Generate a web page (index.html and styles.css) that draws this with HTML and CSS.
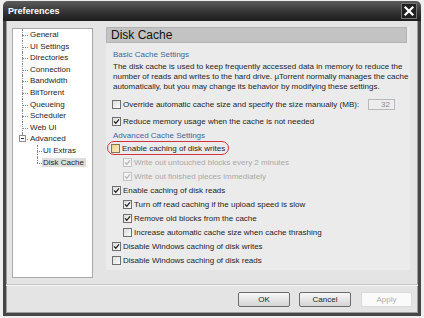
FILE: index.html
```html
<html>
  <head>
    <title>Preferences</title>
    <link rel="stylesheet" href="styles.css">
  </head>
  <body>
    <div class="window">
      <div class="titlebar">
        <span class="title">Preferences</span>
        <span class="close">
          <svg width="14" height="14" viewBox="0 0 14 14">
            <path d="M3.5 3.5 L10.5 10.5 M10.5 3.5 L3.5 10.5" stroke="#fff" stroke-width="2.2" stroke-linecap="square" />
          </svg>
        </span>
      </div>

      <div class="frame">
        <div class="main">
          <!-- Category tree -->
          <div class="tree">
            <ul class="branch">
              <li>General</li>
              <li>UI Settings</li>
              <li>Directories</li>
              <li>Connection</li>
              <li>Bandwidth</li>
              <li>BitTorrent</li>
              <li>Queueing</li>
              <li>Scheduler</li>
              <li>Web UI</li>
              <li class="open">
                <span class="toggle"></span>Advanced
                <ul class="branch sub">
                  <li>UI Extras</li>
                  <li><span class="selected">Disk Cache</span></li>
                </ul>
              </li>
            </ul>
          </div>

          <!-- Settings page -->
          <div class="panel">
            <div class="panel-head">Disk Cache</div>
            <div class="panel-body">
              <div class="section-title">Basic Cache Settings</div>
              <p class="desc">
                The disk cache is used to keep frequently accessed data in memory to reduce the<br>
                number of reads and writes to the hard drive. µTorrent normally manages the cache<br>
                automatically, but you may change its behavior by modifying these settings.
              </p>

              <div class="row spread first">
                <label class="opt"><span class="cb"></span>Override automatic cache size and specify the size manually (MB):</label>
                <span class="numbox">32</span>
              </div>
              <div class="row gap3">
                <span class="cb"><svg width="7" height="7" viewBox="0 0 7 7"><polyline points="1,3.4 2.8,5.3 6,1.4" fill="none" stroke="#222" stroke-width="1.3" /></svg></span>Reduce memory usage when the cache is not needed
              </div>

              <div class="section-title adv">Advanced Cache Settings</div>
              <div class="row">
                <span class="ring"><span class="cb hover"></span>Enable caching of disk writes</span>
              </div>
              <div class="row sub disabled">
                <span class="cb"><svg width="7" height="7" viewBox="0 0 7 7"><polyline points="1,3.4 2.8,5.3 6,1.4" fill="none" stroke="#b4b4b4" stroke-width="1.3" /></svg></span>Write out untouched blocks every 2 minutes
              </div>
              <div class="row sub disabled">
                <span class="cb"><svg width="7" height="7" viewBox="0 0 7 7"><polyline points="1,3.4 2.8,5.3 6,1.4" fill="none" stroke="#b4b4b4" stroke-width="1.3" /></svg></span>Write out finished pieces immediately
              </div>
              <div class="row">
                <span class="cb"><svg width="7" height="7" viewBox="0 0 7 7"><polyline points="1,3.4 2.8,5.3 6,1.4" fill="none" stroke="#222" stroke-width="1.3" /></svg></span>Enable caching of disk reads
              </div>
              <div class="row sub">
                <span class="cb"><svg width="7" height="7" viewBox="0 0 7 7"><polyline points="1,3.4 2.8,5.3 6,1.4" fill="none" stroke="#222" stroke-width="1.3" /></svg></span>Turn off read caching if the upload speed is slow
              </div>
              <div class="row sub">
                <span class="cb"><svg width="7" height="7" viewBox="0 0 7 7"><polyline points="1,3.4 2.8,5.3 6,1.4" fill="none" stroke="#222" stroke-width="1.3" /></svg></span>Remove old blocks from the cache
              </div>
              <div class="row sub">
                <span class="cb"></span>Increase automatic cache size when cache thrashing
              </div>
              <div class="row">
                <span class="cb"><svg width="7" height="7" viewBox="0 0 7 7"><polyline points="1,3.4 2.8,5.3 6,1.4" fill="none" stroke="#222" stroke-width="1.3" /></svg></span>Disable Windows caching of disk writes
              </div>
              <div class="row">
                <span class="cb"></span>Disable Windows caching of disk reads
              </div>
            </div>
          </div>
        </div>

        <div class="footer">
          <span class="btn">OK</span>
          <span class="btn">Cancel</span>
          <span class="btn apply">Apply</span>
        </div>
      </div>
    </div>
  </body>
</html>
```

FILE: styles.css
```css
body {
  margin: 0;
  padding-top: 1px;
  background: #efefef;
  font-family: "Liberation Sans", Arial, sans-serif;
  font-size: 8px;
  color: #1e1e1e;
}

.window {
  margin-left: 3px;
  width: 418px;
  height: 315px;
  display: flex;
  flex-direction: column;
}

/* title bar */
.titlebar {
  height: 20px;
  flex: none;
  display: flex;
  align-items: center;
  justify-content: space-between;
  padding: 0 4px 0 5px;
  border-radius: 5px 5px 0 0;
  background: linear-gradient(#5c5c5c, #343434 55%, #1d1d1d);
}

.title {
  color: #fff;
  font-weight: bold;
  font-size: 9px;
}

.close {
  width: 16px;
  height: 16px;
  box-sizing: border-box;
  display: flex;
  align-items: center;
  justify-content: center;
  background: #202020;
  border: 1px solid #727272;
}

/* window body */
.frame {
  flex: 1;
  display: flex;
  flex-direction: column;
  background: #e4e4e4;
  border: 3px solid #464646;
  border-top: 0;
  box-shadow: inset 1px 0 #9c9c9c, inset -1px 0 #9c9c9c, inset 0 -1px #9c9c9c;
}

.main {
  height: 263px;
  flex: none;
  display: flex;
  box-sizing: border-box;
  padding: 7px 0 0 6px;
}

/* tree */
.tree {
  width: 81px;
  height: 250px;
  box-sizing: border-box;
  background: #fff;
  border: 1px solid #a9a9a9;
}

.branch {
  margin: 0;
  padding: 0 0 0 9px;
}

.branch li {
  list-style-type: none;
  position: relative;
  padding-left: 8px;
  line-height: 11.6px;
}

.branch li::before {
  content: "";
  position: absolute;
  left: 0;
  top: 6px;
  width: 6px;
  border-top: 1px dotted #8a8a8a;
}

.branch li::after {
  content: "";
  position: absolute;
  left: 0;
  top: 0;
  height: 100%;
  border-left: 1px dotted #8a8a8a;
}

.branch li:last-child::after {
  height: 6px;
}

.branch.sub {
  padding-left: 7px;
}

.branch.sub li {
  padding-left: 6px;
}

.branch.sub li::before {
  width: 5px;
}

.toggle {
  position: absolute;
  left: -3px;
  top: 2px;
  width: 7px;
  height: 7px;
  box-sizing: border-box;
  border: 1px solid #8c8c8c;
  background: #fff;
  z-index: 1;
}

.toggle::after {
  content: "";
  position: absolute;
  left: 1px;
  top: 2px;
  width: 3px;
  border-top: 1px solid #333;
}

.selected {
  background: #dedede;
  padding: 0 2px 0 1px;
  margin-left: -1px;
}

/* settings page */
.panel {
  width: 304px;
  height: 243px;
  margin: -1px 0 0 13px;
  background: #ebebeb;
}

.panel-head {
  width: 301px;
  height: 16px;
  box-sizing: border-box;
  padding-left: 4px;
  background: #c3c3c3;
  border: 1px solid #b3b3b3;
  font-size: 12px;
  line-height: 14px;
  color: #111;
}

.panel-body {
  padding-left: 6px;
}

.section-title {
  color: #3d66a0;
  line-height: 10px;
  margin-top: 7px;
  padding-left: 1px;
}

.section-title.adv {
  margin-top: 3px;
}

.desc {
  margin: 2px 0 0;
  padding-left: 1px;
  line-height: 10px;
}

.row {
  display: flex;
  align-items: center;
  height: 14px;
}

.row.first {
  margin-top: 5px;
}

.row.gap3 {
  margin-top: 3px;
}

.row.sub {
  padding-left: 11px;
}

.row.spread {
  justify-content: space-between;
  padding-right: 15px;
}

.opt {
  display: flex;
  align-items: center;
}

.cb {
  width: 9px;
  height: 9px;
  flex: none;
  box-sizing: border-box;
  margin-right: 2px;
  display: inline-flex;
  align-items: center;
  justify-content: center;
  border: 1px solid #6f6f6f;
  background: linear-gradient(135deg, #dcdcdc, #fbfbfb);
}

.cb.hover {
  border-color: #8a7750;
  background: linear-gradient(135deg, #ecd690, #f8ecc0);
}

.disabled {
  color: #a9a9a9;
}

.disabled .cb {
  border-color: #c2c2c2;
  background: #f4f4f4;
}

.ring {
  display: inline-flex;
  align-items: center;
  height: 12px;
  margin-left: -5px;
  padding: 0 3px 0 3px;
  border: 1.5px solid #cc3640;
  border-radius: 8px;
}

.numbox {
  width: 27px;
  height: 11px;
  box-sizing: border-box;
  border: 1px solid #b8b8b8;
  background: #ededed;
  color: #8a8a8a;
  text-align: right;
  padding-right: 4px;
  line-height: 9px;
}

/* buttons */
.footer {
  flex: 1;
  display: flex;
  justify-content: flex-end;
  align-items: flex-start;
  gap: 9px;
  padding: 7px 6px 0 0;
  border-top: 1px solid #c4c4c4;
  box-shadow: inset 0 1px #f6f6f6;
}

.btn {
  width: 52px;
  height: 15px;
  box-sizing: border-box;
  display: flex;
  align-items: center;
  justify-content: center;
  border: 1px solid #6c6c6c;
  border-radius: 2px;
  background: linear-gradient(#f8f8f8, #e6e6e6 50%, #d4d4d4);
}

.btn.apply {
  width: 51px;
  margin-left: 1px;
  border-color: #dadada;
  background: #fafafa;
  color: #b0b0b0;
}
```
